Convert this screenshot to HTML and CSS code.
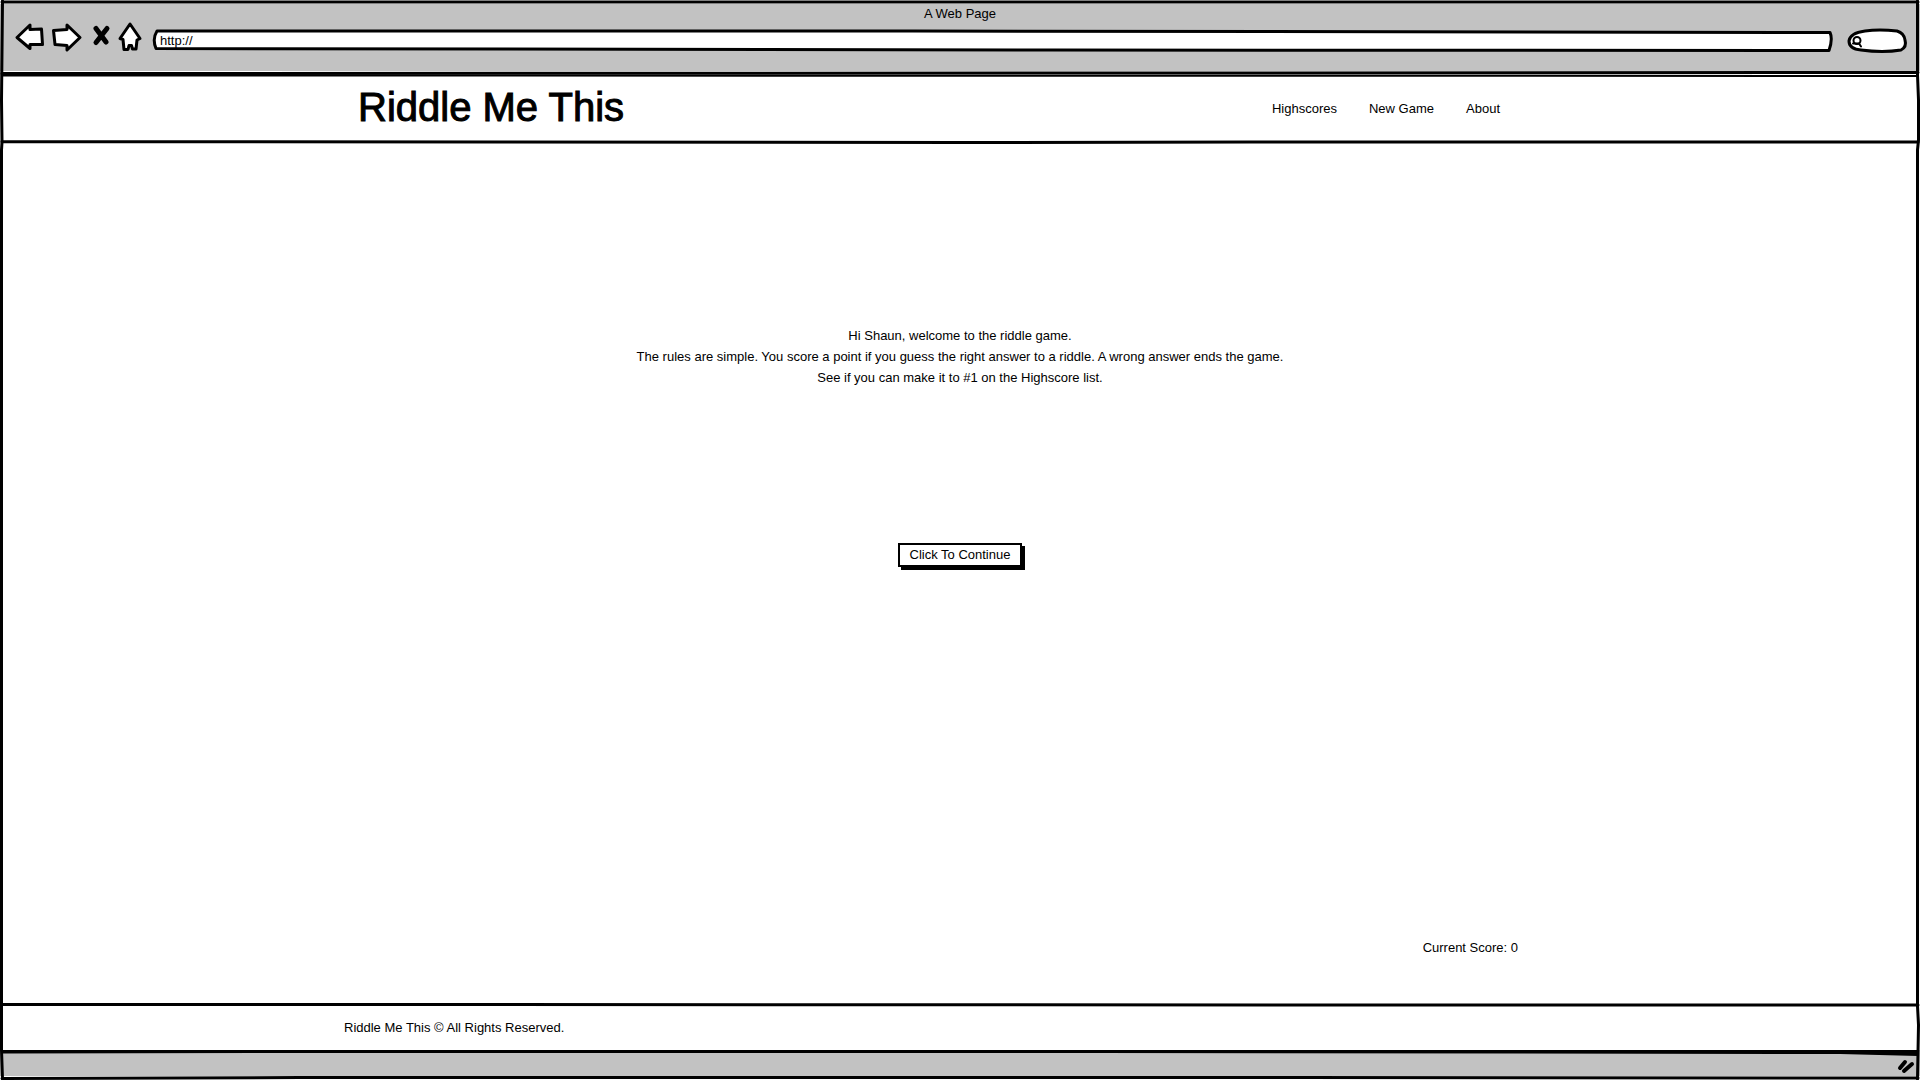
FILE: index.html
```html
<!DOCTYPE html>
<html lang="en">
<head>
<meta charset="utf-8">
<title>Riddle Me This</title>
<link rel="stylesheet" href="styles.css">
</head>
<body>
<div class="window">
  <svg class="rule" viewBox="0 0 1920 4" preserveAspectRatio="none" aria-hidden="true"><path d="M2 2H1918"/></svg>
  <div class="chrome">
    <div class="window-title">A Web Page</div>
    <div class="toolbar">
      <button class="tool" type="button" aria-label="Back">
        <svg width="30" height="30" viewBox="0 0 30 30"><path d="M3 15.500L16 3V7.500L27.500 7L28.500 22.500H16V26.500Z"/></svg>
      </button>
      <button class="tool" type="button" aria-label="Forward">
        <svg width="30" height="30" viewBox="0 0 30 30"><path d="M1.500 8.500L15 7.500V3L28 15.500L15 28V23.500L3 22.500Z"/></svg>
      </button>
      <button class="tool tool-stop" type="button" aria-label="Stop">
        <svg width="18" height="30" viewBox="0 0 18 30"><path class="cross" d="M3 6.500L13 20M14 6.500L3 20.500"/></svg>
      </button>
      <button class="tool" type="button" aria-label="Home">
        <svg width="24" height="30" viewBox="0 0 24 30"><path d="M11 2L21 16.500L18 18L17 27H13.500L12.500 23.500H10L9 27.500H5L4 17.500L1 16.500Z"/></svg>
      </button>
      <label class="address">
        <svg class="backdrop" viewBox="0 0 1680 22" preserveAspectRatio="none" aria-hidden="true"><path d="M5 1L760 1L1677 2.500Q1680 9 1676 20.500L900 20L4 18.500Q0 9 5 1Z"/></svg>
        <input class="address-input" type="text" value="http://" aria-label="Address">
      </label>
      <label class="search">
        <svg class="backdrop" viewBox="0 0 60 26" aria-hidden="true"><path d="M18 3Q32 1 50 3Q57 5 58 12Q60 19 54 22Q36 25 14 22Q2 21 2 13Q3 5 18 3Z"/><circle class="lens" cx="10" cy="12.500" r="3.500"/><path class="lens" d="M6 15.500H12L14 18.500"/></svg>
        <input class="search-input" type="text" aria-label="Search">
      </label>
    </div>
  </div>
  <svg class="rule" viewBox="0 0 1920 4" preserveAspectRatio="none" aria-hidden="true"><path d="M2 2.500L1100 2L1918 1.500"/></svg>
  <header class="header">
    <svg class="rule" viewBox="0 0 1920 4" preserveAspectRatio="none" aria-hidden="true"><path class="thin" d="M2 0.500L1100 0.700L1918 1"/></svg>
    <div class="container header-row">
      <h1 class="brand">Riddle Me This</h1>
      <nav class="nav">
        <a href="#highscores">Highscores</a>
        <a href="#new">New Game</a>
        <a href="#about">About</a>
      </nav>
    </div>
    <svg class="rule" viewBox="0 0 1920 4" preserveAspectRatio="none" aria-hidden="true"><path d="M2 1.700L500 2L960 2.600L1250 2L1918 2"/></svg>
  </header>
  <main class="main">
    <div class="intro">
      <p>Hi Shaun, welcome to the riddle game.</p>
      <p>The rules are simple. You score a point if you guess the right answer to a riddle. A wrong answer ends the game.</p>
      <p>See if you can make it to #1 on the Highscore list.</p>
    </div>
    <button class="continue" type="button">Click To Continue</button>
    <div class="container score">Current Score: 0</div>
  </main>
  <footer class="footer">
    <svg class="rule" viewBox="0 0 1920 4" preserveAspectRatio="none" aria-hidden="true"><path d="M2 1.500L500 1.500L1300 2L1918 2"/></svg>
    <div class="container copyright">Riddle Me This © All Rights Reserved.</div>
  </footer>
  <svg class="rule rule-status" viewBox="0 0 1920 6" preserveAspectRatio="none" aria-hidden="true"><path class="solid" d="M2 0H1918V6L1840 4L1100 3L300 3L2 3.500Z"/></svg>
  <div class="status">
    <svg width="20" height="18" viewBox="0 0 20 18" aria-hidden="true"><path class="grip" d="M4 11L9 5M8 14L16 7"/></svg>
  </div>
  <svg class="rule" viewBox="0 0 1920 4" preserveAspectRatio="none" aria-hidden="true"><path d="M2 2.500L300 1.500L1300 1.500L1918 2"/></svg>
  <svg class="side side-left" viewBox="0 0 4 1080" preserveAspectRatio="none" aria-hidden="true"><path d="M2.500 1L1.500 100L2 142L1.500 150V1006L1.500 1050L2.500 1079"/></svg>
  <svg class="side side-right" viewBox="0 0 4 1080" preserveAspectRatio="none" aria-hidden="true"><path d="M1.500 1V75L2.500 100L2.500 140L1.500 150V1006L2.500 1025L1.500 1079"/></svg>
</div>
</body>
</html>
```
FILE: styles.css
```css
* { box-sizing: border-box; }

body {
  margin: 0;
  background: #fff;
  color: #000;
  font: 13px/21px "Liberation Sans", Arial, sans-serif;
}

h1, p { margin: 0; }

a {
  color: inherit;
  text-decoration: none;
}

button, input {
  font: inherit;
  color: inherit;
}

svg {
  display: block;
  flex: none;
  overflow: visible;
  fill: #fff;
  stroke: #000;
  stroke-width: 2px;
  stroke-linejoin: round;
  stroke-linecap: round;
}

.window {
  position: relative;
  display: flex;
  flex-direction: column;
  min-height: 100vh;
}

.rule {
  width: 100%;
  height: 4px;
  fill: none;
  stroke-width: 3px;
}

.rule-status {
  height: 6px;
  background: #c2c2c2;
}

.thin { stroke-width: 2px; }
.solid { fill: #000; stroke: none; }

.side {
  position: absolute;
  top: 0;
  width: 4px;
  height: 100%;
  fill: none;
  stroke-width: 3px;
}

.side-left { left: 0; }
.side-right { right: 0; }

.chrome {
  background: #c2c2c2;
  padding-bottom: 17px;
}

.window-title {
  text-align: center;
  line-height: 20px;
}

.toolbar {
  display: flex;
  align-items: flex-start;
  gap: 8px;
  height: 30px;
  padding: 0 13px 0 14px;
}

.tool {
  display: flex;
  margin: -2px 0 0;
  padding: 0;
  border: 0;
  background: none;
}

.tool svg, .backdrop { stroke-width: 3px; }

.tool-stop { margin-left: 3px; }
.cross { fill: none; stroke-width: 5px; }

.address {
  position: relative;
  flex: 1;
  height: 22px;
  margin: 6px 6px 0 1px;
}

.backdrop {
  position: absolute;
  inset: 0;
  width: 100%;
  height: 100%;
}

.address-input, .search-input {
  position: relative;
  display: block;
  width: 100%;
  height: 20px;
  padding: 0 8px;
  border: 0;
  background: none;
}

.search {
  position: relative;
  width: 60px;
  height: 26px;
  margin-top: 4px;
}

.search-input { padding-left: 20px; }
.lens { fill: none; stroke-width: 2px; }

.header {
  display: flex;
  flex-direction: column;
}

.container {
  width: 100%;
  max-width: 1232px;
  margin: 0 auto;
}

.header-row {
  display: flex;
  align-items: center;
  justify-content: space-between;
  height: 61px;
  padding: 0 76px 2px 14px;
}

.brand {
  padding-bottom: 4px;
  font-size: 40px;
  font-weight: 400;
  line-height: 56px;
  -webkit-text-stroke: 1px #000;
}

.nav {
  display: flex;
  gap: 32px;
}

.main {
  flex: 1;
  display: flex;
  flex-direction: column;
  align-items: center;
  padding: 181px 4px 45px;
}

.intro { text-align: center; }

.continue {
  margin-top: 155px;
  height: 24px;
  padding: 0 10px;
  border: 2px solid #000;
  background: #fff;
  box-shadow: 3px 3px 0 #000;
  line-height: 20px;
}

.score {
  margin-top: auto;
  padding-right: 58px;
  text-align: right;
}

.copyright {
  height: 43px;
  padding-top: 10px;
}

.status {
  display: flex;
  align-items: center;
  justify-content: flex-end;
  height: 20px;
  padding-right: 4px;
  background: #c2c2c2;
}

.grip { stroke-width: 4px; }
```
